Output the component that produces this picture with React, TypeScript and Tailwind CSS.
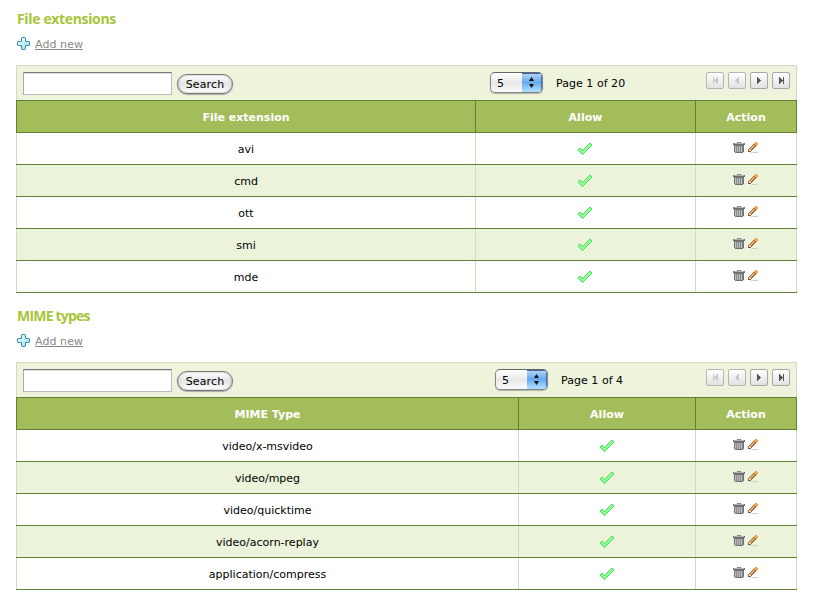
import React from 'react';

type TableProps = {
  title: string;
  titleClass: string;
  column: string;
  pageText: string;
  rows: string[];
  firstWidth: string;
  allowWidth: string;
  checkOffset: string;
  spacer: string;
};

function Plus() {
  return (
    <svg width="13" height="13" viewBox="0 0 13 13" className="shrink-0">
      <defs>
        <linearGradient id="plusFill" x1="0" y1="0" x2="1" y2="1">
          <stop offset="0" stopColor="#ffffff" />
          <stop offset="0.5" stopColor="#c5edf7" />
          <stop offset="1" stopColor="#8edcee" />
        </linearGradient>
      </defs>
      <path d="M5 .5h3l.5.5v3.5H12l.5.5v3l-.5.5H8.500V12l-.5.5H5l-.5-.5V8.500H1L.5 8V5l.5-.5h3.500V1z" fill="url(#plusFill)" stroke="#348ba3" />
    </svg>
  );
}

function Check() {
  return (
    <svg width="14" height="12" viewBox="0 0 14 12" shapeRendering="crispEdges">
      <path d="M11 0h2v1h1v2h-1v1h-1v1h-1v1h-1v1H9v1H8v1H7v1H6v1H5v1H4v-1H3v-1H2V9H1V8H0V6h1V5h2v1h1v1h1V6h1V5h1V4h1V3h1V2h1V1h1z" fill="#48e456" />
      <path d="M11 1h2v2h-1v1h-1v1h-1v1H9v1H8v1H7v1H6v1H5v1H4v-1H3V9H2V8H1V6h2v1h1v1h1V7h1V6h1V5h1V4h1V3h1V2h1z" fill="#93f99b" />
    </svg>
  );
}

function Trash() {
  return (
    <svg width="12" height="11" viewBox="0 0 12 11" shapeRendering="crispEdges">
      <path d="M4 0h4v1h4v2h-1v7h-1v1H2v-1H1V3H0V1h4z" fill="#707070" />
      <path d="M5 0h2v1H5z" fill="#999" />
      <path d="M1 1h10v1H1z" fill="#b3b3b3" />
      <path d="M2 4h1v6H2zM4 4h1v6H4zM6 4h1v6H6zM8 4h1v6H8z" fill="#bdbdbd" />
      <path d="M3 4h1v6H3zM5 4h1v6H5zM7 4h1v6H7zM9 4h1v6H9z" fill="#8a8a8a" />
    </svg>
  );
}

function Pencil() {
  return (
    <svg width="11" height="11" viewBox="0 0 11 11" shapeRendering="crispEdges">
      <path d="M3 10h7v1H3z" fill="#d2d0cc" />
      <path d="M7 0h2v1h1v2H9v1H8v1H7v1H6v1H5v1H4v1H3v1H0V7h1V6h1V5h1V4h1V3h1V2h1V1h1z" fill="#a96f44" />
      <path d="M5 3h2v1H6v1H5v1H4v1H3v1H2V6h1V5h1V4h1z" fill="#e0ac7b" />
      <path d="M7 0h2v1h1v2H9v1H8V3H7V2H6V1h1z" fill="#f39a35" />
      <path d="M7 1h1v1h1v1H8V2H7z" fill="#ffbd58" />
      <path d="M1 7h1v1h1v1H1z" fill="#ead5bd" />
      <path d="M0 9h2v1H0z" fill="#615243" />
    </svg>
  );
}

const pagerIcons = [
  { d: 'M0 0h1v7H0zM4 0h1v7H4V6H3V5H2V4H1V3h1V2h1V1h1z', off: true },
  { d: 'M3 0h1v7H3V6H2V5H1V4H0V3h1V2h1V1h1z', off: true },
  { d: 'M0 0h1v1h1v1h1v1h1v1H3v1H2v1H1v1H0z', off: false },
  { d: 'M0 0h1v1h1v1h1v1h1V0h1v7H4V4H3v1H2v1H1v1H0z', off: false },
];

function Pager() {
  return (
    <div className="flex gap-1 pt-1.5">
      {pagerIcons.map((icon, i) => (
        <button
          key={i}
          className={
            'flex h-[17px] w-[18px] items-center justify-center rounded-[2px] border bg-linear-to-b from-white to-[#e2e2e2] ' +
            (icon.off ? 'border-[#b5b5b5] text-[#c8c8c8]' : 'border-[#a7a7a7] text-[#555]')
          }
        >
          <svg width="5" height="7" viewBox="0 0 5 7" shapeRendering="crispEdges">
            <path d={icon.d} fill="currentColor" />
          </svg>
        </button>
      ))}
    </div>
  );
}

function SizeSelect() {
  return (
    <div className="mt-1.5 flex h-[21px] w-[53px] shrink-0 overflow-hidden rounded-[5px] border border-[#858585] border-t-[#666] bg-linear-to-b from-white via-[#e9e9e9] to-[#fafafa] shadow-[0_1px_1px_#b0b5a5]">
      <span className="w-[31px] pt-px pl-1.5 text-[11px] leading-[20px]">5</span>
      <span className="flex w-[20px] items-center justify-center bg-linear-to-b from-[#b8d7f5] via-[#65a9ed] to-[#b4e5ff] shadow-[inset_0_1px_0_#4863a8,inset_-1px_0_1px_#4372b5]">
        <svg width="5" height="11" viewBox="0 0 5 11" className="mr-0.5">
          <path d="M2.500 0 5 4H0zM0 7h5l-2.500 4z" fill="#111" />
        </svg>
      </span>
    </div>
  );
}

function DataTable({ title, titleClass, column, pageText, rows, firstWidth, allowWidth, checkOffset, spacer }: TableProps) {
  return (
    <section className="h-[297px]">
      <h2 className="h-[27px] pl-px font-['Open_Sans','Noto_Sans',sans-serif] text-[14px] leading-[18px] font-bold text-[#a7c538]">
        <span className={titleClass}>{title}</span>
      </h2>
      <div className="flex h-[28px] items-start gap-[5px] pl-px text-[#888]">
        <Plus />
        <a className="mt-px h-3 border-b border-[#888] text-[11px] leading-[13px] tracking-[0.08px]">Add new</a>
      </div>
      <div className="flex h-[35px] border border-b-0 border-[#d3dabe] bg-[#eef3dc] pl-1.5">
        <input className="mt-1.5 h-[23px] w-[149px] shrink-0 border border-[#bbb] border-t-[#777] border-l-[#aaa] bg-white shadow-[inset_0_1px_0_#ddd] outline-none" />
        <button className="mt-2 ml-[5px] h-[20px] w-[56px] shrink-0 rounded-full border border-[#777] bg-linear-to-b from-white via-[#e4e4e4] to-white pt-px text-[11px] leading-[17px] tracking-[0.12px] text-black shadow-[0_1px_1px_#aaa,inset_0_0_2px_#999]">
          Search
        </button>
        <div className={spacer} />
        <SizeSelect />
        <span className="ml-[13px] pt-[11px] text-[11px] leading-[14px] tracking-[0.04px] whitespace-nowrap">{pageText}</span>
        <div className="ml-auto pr-1.5">
          <Pager />
        </div>
      </div>
      <div className="flex h-[33px] border border-[#5f8035] bg-[#a4bd5b] text-center text-[11px] leading-[33px] font-bold text-white">
        <div className={firstWidth + ' border-r border-[#5f8035]'}>{column}</div>
        <div className={allowWidth + ' border-r border-[#5f8035]'}>Allow</div>
        <div className="w-[100px]">Action</div>
      </div>
      {rows.map((row, i) => (
        <div
          key={row}
          className={
            'flex h-[32px] border-b border-[#5f8035] text-center text-[11px] leading-[33px] ' +
            (i % 2 ? 'bg-[#ebf3da]' : 'bg-white')
          }
        >
          <div className="w-px bg-[#d3dabe]" />
          <div className={firstWidth + ' h-[31px] border-r border-[#d3dabe]'}>{row}</div>
          <div className={allowWidth + ' border-r border-[#d3dabe] pt-[10px] ' + checkOffset}>
            <Check />
          </div>
          <div className="flex w-[101px] gap-[3px] border-r border-[#d3dabe] pt-[9px] pl-[37px]">
            <Trash />
            <Pencil />
          </div>
        </div>
      ))}
    </section>
  );
}

export default function App() {
  return (
    <main className="h-[609px] w-[814px] overflow-hidden bg-white pt-[10px] pl-4 font-['DejaVu_Sans',sans-serif] text-black">
      <div className="w-[781px]">
        <DataTable
          title="File extensions"
          titleClass="tracking-[-0.35px]"
          column="File extension"
          pageText="Page 1 of 20"
          rows={['avi', 'cmd', 'ott', 'smi', 'mde']}
          firstWidth="w-[459px]"
          allowWidth="w-[220px]"
          checkOffset="pl-[102px]"
          spacer="w-[257px] shrink-0"
        />
        <DataTable
          title="MIME types"
          titleClass="tracking-[-0.8px]"
          column="MIME Type"
          pageText="Page 1 of 4"
          rows={['video/x-msvideo', 'video/mpeg', 'video/quicktime', 'video/acorn-replay', 'application/compress']}
          firstWidth="w-[502px]"
          allowWidth="w-[177px]"
          checkOffset="pl-[81px]"
          spacer="w-[262px] shrink-0"
        />
      </div>
    </main>
  );
}
